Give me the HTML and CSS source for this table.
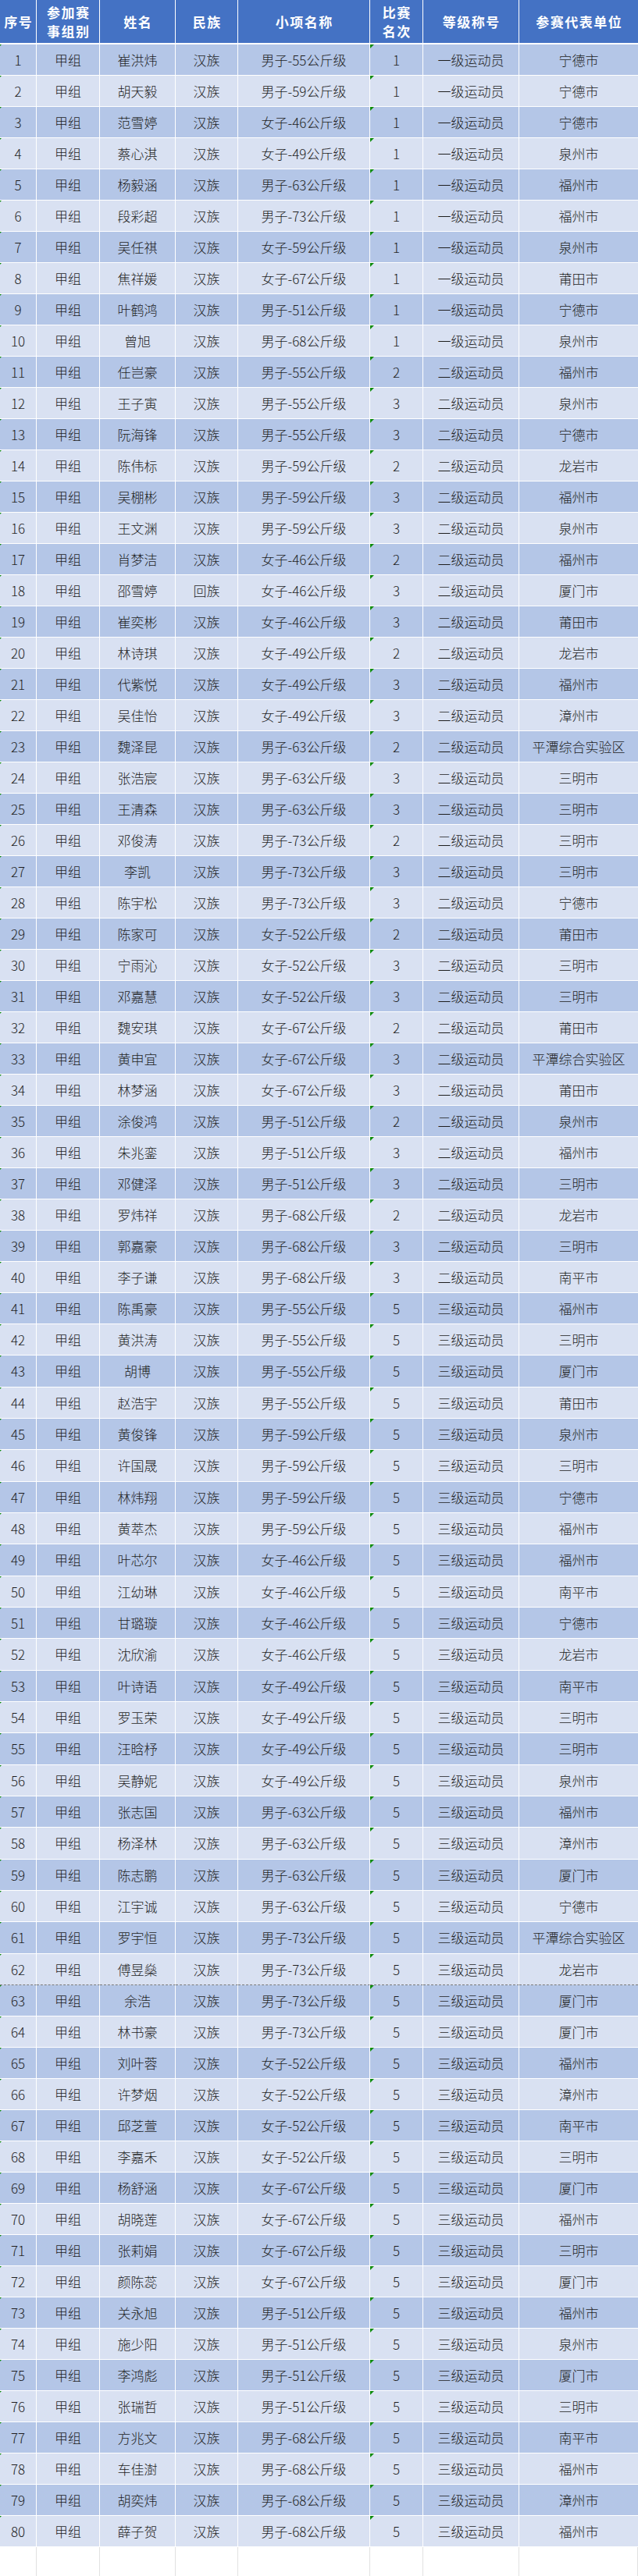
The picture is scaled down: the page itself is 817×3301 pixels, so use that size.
FILE: index.html
```html
<!DOCTYPE html>
<html lang="zh-CN">
<head>
<meta charset="utf-8">
<title>成绩表</title>
<link rel="stylesheet" href="styles.css">
</head>
<body>
<table class="sheet">
<colgroup>
<col class="w1"><col class="w2"><col class="w3"><col class="w4"><col class="w5"><col class="w6"><col class="w7"><col class="w8">
</colgroup>
<thead>
<tr><th>序号</th><th>参加赛<br>事组别</th><th>姓名</th><th>民族</th><th>小项名称</th><th>比赛<br>名次</th><th>等级称号</th><th>参赛代表单位</th></tr>
</thead>
<tbody>
<tr><td class="no">1</td><td>甲组</td><td>崔洪炜</td><td>汉族</td><td>男子-55公斤级</td><td class="rk">1</td><td>一级运动员</td><td>宁德市</td></tr>
<tr><td class="no">2</td><td>甲组</td><td>胡天毅</td><td>汉族</td><td>男子-59公斤级</td><td class="rk">1</td><td>一级运动员</td><td>宁德市</td></tr>
<tr><td class="no">3</td><td>甲组</td><td>范雪婷</td><td>汉族</td><td>女子-46公斤级</td><td class="rk">1</td><td>一级运动员</td><td>宁德市</td></tr>
<tr><td class="no">4</td><td>甲组</td><td>蔡心淇</td><td>汉族</td><td>女子-49公斤级</td><td class="rk">1</td><td>一级运动员</td><td>泉州市</td></tr>
<tr><td class="no">5</td><td>甲组</td><td>杨毅涵</td><td>汉族</td><td>男子-63公斤级</td><td class="rk">1</td><td>一级运动员</td><td>福州市</td></tr>
<tr><td class="no">6</td><td>甲组</td><td>段彩超</td><td>汉族</td><td>男子-73公斤级</td><td class="rk">1</td><td>一级运动员</td><td>福州市</td></tr>
<tr><td class="no">7</td><td>甲组</td><td>吴任祺</td><td>汉族</td><td>女子-59公斤级</td><td class="rk">1</td><td>一级运动员</td><td>泉州市</td></tr>
<tr><td class="no">8</td><td>甲组</td><td>焦祥媛</td><td>汉族</td><td>女子-67公斤级</td><td class="rk">1</td><td>一级运动员</td><td>莆田市</td></tr>
<tr><td class="no">9</td><td>甲组</td><td>叶鹤鸿</td><td>汉族</td><td>男子-51公斤级</td><td class="rk">1</td><td>一级运动员</td><td>宁德市</td></tr>
<tr><td class="no">10</td><td>甲组</td><td>曾旭</td><td>汉族</td><td>男子-68公斤级</td><td class="rk">1</td><td>一级运动员</td><td>泉州市</td></tr>
<tr><td class="no">11</td><td>甲组</td><td>任岂豪</td><td>汉族</td><td>男子-55公斤级</td><td class="rk">2</td><td>二级运动员</td><td>福州市</td></tr>
<tr><td class="no">12</td><td>甲组</td><td>王子寅</td><td>汉族</td><td>男子-55公斤级</td><td class="rk">3</td><td>二级运动员</td><td>泉州市</td></tr>
<tr><td class="no">13</td><td>甲组</td><td>阮海锋</td><td>汉族</td><td>男子-55公斤级</td><td class="rk">3</td><td>二级运动员</td><td>宁德市</td></tr>
<tr><td class="no">14</td><td>甲组</td><td>陈伟标</td><td>汉族</td><td>男子-59公斤级</td><td class="rk">2</td><td>二级运动员</td><td>龙岩市</td></tr>
<tr><td class="no">15</td><td>甲组</td><td>吴棚彬</td><td>汉族</td><td>男子-59公斤级</td><td class="rk">3</td><td>二级运动员</td><td>福州市</td></tr>
<tr><td class="no">16</td><td>甲组</td><td>王文渊</td><td>汉族</td><td>男子-59公斤级</td><td class="rk">3</td><td>二级运动员</td><td>泉州市</td></tr>
<tr><td class="no">17</td><td>甲组</td><td>肖梦洁</td><td>汉族</td><td>女子-46公斤级</td><td class="rk">2</td><td>二级运动员</td><td>福州市</td></tr>
<tr><td class="no">18</td><td>甲组</td><td>邵雪婷</td><td>回族</td><td>女子-46公斤级</td><td class="rk">3</td><td>二级运动员</td><td>厦门市</td></tr>
<tr><td class="no">19</td><td>甲组</td><td>崔奕彬</td><td>汉族</td><td>女子-46公斤级</td><td class="rk">3</td><td>二级运动员</td><td>莆田市</td></tr>
<tr><td class="no">20</td><td>甲组</td><td>林诗琪</td><td>汉族</td><td>女子-49公斤级</td><td class="rk">2</td><td>二级运动员</td><td>龙岩市</td></tr>
<tr><td class="no">21</td><td>甲组</td><td>代紫悦</td><td>汉族</td><td>女子-49公斤级</td><td class="rk">3</td><td>二级运动员</td><td>福州市</td></tr>
<tr><td class="no">22</td><td>甲组</td><td>吴佳怡</td><td>汉族</td><td>女子-49公斤级</td><td class="rk">3</td><td>二级运动员</td><td>漳州市</td></tr>
<tr><td class="no">23</td><td>甲组</td><td>魏泽昆</td><td>汉族</td><td>男子-63公斤级</td><td class="rk">2</td><td>二级运动员</td><td>平潭综合实验区</td></tr>
<tr><td class="no">24</td><td>甲组</td><td>张浩宸</td><td>汉族</td><td>男子-63公斤级</td><td class="rk">3</td><td>二级运动员</td><td>三明市</td></tr>
<tr><td class="no">25</td><td>甲组</td><td>王清森</td><td>汉族</td><td>男子-63公斤级</td><td class="rk">3</td><td>二级运动员</td><td>三明市</td></tr>
<tr><td class="no">26</td><td>甲组</td><td>邓俊涛</td><td>汉族</td><td>男子-73公斤级</td><td class="rk">2</td><td>二级运动员</td><td>三明市</td></tr>
<tr><td class="no">27</td><td>甲组</td><td>李凯</td><td>汉族</td><td>男子-73公斤级</td><td class="rk">3</td><td>二级运动员</td><td>三明市</td></tr>
<tr><td class="no">28</td><td>甲组</td><td>陈宇松</td><td>汉族</td><td>男子-73公斤级</td><td class="rk">3</td><td>二级运动员</td><td>宁德市</td></tr>
<tr><td class="no">29</td><td>甲组</td><td>陈家可</td><td>汉族</td><td>女子-52公斤级</td><td class="rk">2</td><td>二级运动员</td><td>莆田市</td></tr>
<tr><td class="no">30</td><td>甲组</td><td>宁雨沁</td><td>汉族</td><td>女子-52公斤级</td><td class="rk">3</td><td>二级运动员</td><td>三明市</td></tr>
<tr><td class="no">31</td><td>甲组</td><td>邓嘉慧</td><td>汉族</td><td>女子-52公斤级</td><td class="rk">3</td><td>二级运动员</td><td>三明市</td></tr>
<tr><td class="no">32</td><td>甲组</td><td>魏安琪</td><td>汉族</td><td>女子-67公斤级</td><td class="rk">2</td><td>二级运动员</td><td>莆田市</td></tr>
<tr><td class="no">33</td><td>甲组</td><td>黄申宜</td><td>汉族</td><td>女子-67公斤级</td><td class="rk">3</td><td>二级运动员</td><td>平潭综合实验区</td></tr>
<tr><td class="no">34</td><td>甲组</td><td>林梦涵</td><td>汉族</td><td>女子-67公斤级</td><td class="rk">3</td><td>二级运动员</td><td>莆田市</td></tr>
<tr><td class="no">35</td><td>甲组</td><td>涂俊鸿</td><td>汉族</td><td>男子-51公斤级</td><td class="rk">2</td><td>二级运动员</td><td>泉州市</td></tr>
<tr><td class="no">36</td><td>甲组</td><td>朱兆銮</td><td>汉族</td><td>男子-51公斤级</td><td class="rk">3</td><td>二级运动员</td><td>福州市</td></tr>
<tr><td class="no">37</td><td>甲组</td><td>邓健泽</td><td>汉族</td><td>男子-51公斤级</td><td class="rk">3</td><td>二级运动员</td><td>三明市</td></tr>
<tr><td class="no">38</td><td>甲组</td><td>罗炜祥</td><td>汉族</td><td>男子-68公斤级</td><td class="rk">2</td><td>二级运动员</td><td>龙岩市</td></tr>
<tr><td class="no">39</td><td>甲组</td><td>郭嘉豪</td><td>汉族</td><td>男子-68公斤级</td><td class="rk">3</td><td>二级运动员</td><td>三明市</td></tr>
<tr><td class="no">40</td><td>甲组</td><td>李子谦</td><td>汉族</td><td>男子-68公斤级</td><td class="rk">3</td><td>二级运动员</td><td>南平市</td></tr>
<tr><td class="no">41</td><td>甲组</td><td>陈禹豪</td><td>汉族</td><td>男子-55公斤级</td><td class="rk">5</td><td>三级运动员</td><td>福州市</td></tr>
<tr><td class="no">42</td><td>甲组</td><td>黄洪涛</td><td>汉族</td><td>男子-55公斤级</td><td class="rk">5</td><td>三级运动员</td><td>三明市</td></tr>
<tr class="tall"><td class="no">43</td><td>甲组</td><td>胡博</td><td>汉族</td><td>男子-55公斤级</td><td class="rk">5</td><td>三级运动员</td><td>厦门市</td></tr>
<tr><td class="no">44</td><td>甲组</td><td>赵浩宇</td><td>汉族</td><td>男子-55公斤级</td><td class="rk">5</td><td>三级运动员</td><td>莆田市</td></tr>
<tr><td class="no">45</td><td>甲组</td><td>黄俊锋</td><td>汉族</td><td>男子-59公斤级</td><td class="rk">5</td><td>三级运动员</td><td>泉州市</td></tr>
<tr class="tall"><td class="no">46</td><td>甲组</td><td>许国晟</td><td>汉族</td><td>男子-59公斤级</td><td class="rk">5</td><td>三级运动员</td><td>三明市</td></tr>
<tr><td class="no">47</td><td>甲组</td><td>林炜翔</td><td>汉族</td><td>男子-59公斤级</td><td class="rk">5</td><td>三级运动员</td><td>宁德市</td></tr>
<tr><td class="no">48</td><td>甲组</td><td>黄萃杰</td><td>汉族</td><td>男子-59公斤级</td><td class="rk">5</td><td>三级运动员</td><td>福州市</td></tr>
<tr class="tall"><td class="no">49</td><td>甲组</td><td>叶芯尔</td><td>汉族</td><td>女子-46公斤级</td><td class="rk">5</td><td>三级运动员</td><td>福州市</td></tr>
<tr><td class="no">50</td><td>甲组</td><td>江幼琳</td><td>汉族</td><td>女子-46公斤级</td><td class="rk">5</td><td>三级运动员</td><td>南平市</td></tr>
<tr><td class="no">51</td><td>甲组</td><td>甘璐璇</td><td>汉族</td><td>女子-46公斤级</td><td class="rk">5</td><td>三级运动员</td><td>宁德市</td></tr>
<tr class="tall"><td class="no">52</td><td>甲组</td><td>沈欣渝</td><td>汉族</td><td>女子-46公斤级</td><td class="rk">5</td><td>三级运动员</td><td>龙岩市</td></tr>
<tr><td class="no">53</td><td>甲组</td><td>叶诗语</td><td>汉族</td><td>女子-49公斤级</td><td class="rk">5</td><td>三级运动员</td><td>南平市</td></tr>
<tr><td class="no">54</td><td>甲组</td><td>罗玉荣</td><td>汉族</td><td>女子-49公斤级</td><td class="rk">5</td><td>三级运动员</td><td>三明市</td></tr>
<tr class="tall"><td class="no">55</td><td>甲组</td><td>汪晗杼</td><td>汉族</td><td>女子-49公斤级</td><td class="rk">5</td><td>三级运动员</td><td>三明市</td></tr>
<tr><td class="no">56</td><td>甲组</td><td>吴静妮</td><td>汉族</td><td>女子-49公斤级</td><td class="rk">5</td><td>三级运动员</td><td>泉州市</td></tr>
<tr><td class="no">57</td><td>甲组</td><td>张志国</td><td>汉族</td><td>男子-63公斤级</td><td class="rk">5</td><td>三级运动员</td><td>福州市</td></tr>
<tr class="tall"><td class="no">58</td><td>甲组</td><td>杨泽林</td><td>汉族</td><td>男子-63公斤级</td><td class="rk">5</td><td>三级运动员</td><td>漳州市</td></tr>
<tr><td class="no">59</td><td>甲组</td><td>陈志鹏</td><td>汉族</td><td>男子-63公斤级</td><td class="rk">5</td><td>三级运动员</td><td>厦门市</td></tr>
<tr><td class="no">60</td><td>甲组</td><td>江宇诚</td><td>汉族</td><td>男子-63公斤级</td><td class="rk">5</td><td>三级运动员</td><td>宁德市</td></tr>
<tr class="tall"><td class="no">61</td><td>甲组</td><td>罗宇恒</td><td>汉族</td><td>男子-73公斤级</td><td class="rk">5</td><td>三级运动员</td><td>平潭综合实验区</td></tr>
<tr class="brk"><td class="no">62</td><td>甲组</td><td>傅昱燊</td><td>汉族</td><td>男子-73公斤级</td><td class="rk">5</td><td>三级运动员</td><td>龙岩市</td></tr>
<tr><td class="no">63</td><td>甲组</td><td>余浩</td><td>汉族</td><td>男子-73公斤级</td><td class="rk">5</td><td>三级运动员</td><td>厦门市</td></tr>
<tr><td class="no">64</td><td>甲组</td><td>林书豪</td><td>汉族</td><td>男子-73公斤级</td><td class="rk">5</td><td>三级运动员</td><td>厦门市</td></tr>
<tr><td class="no">65</td><td>甲组</td><td>刘叶蓉</td><td>汉族</td><td>女子-52公斤级</td><td class="rk">5</td><td>三级运动员</td><td>福州市</td></tr>
<tr><td class="no">66</td><td>甲组</td><td>许梦烟</td><td>汉族</td><td>女子-52公斤级</td><td class="rk">5</td><td>三级运动员</td><td>漳州市</td></tr>
<tr><td class="no">67</td><td>甲组</td><td>邱芝萱</td><td>汉族</td><td>女子-52公斤级</td><td class="rk">5</td><td>三级运动员</td><td>南平市</td></tr>
<tr><td class="no">68</td><td>甲组</td><td>李嘉禾</td><td>汉族</td><td>女子-52公斤级</td><td class="rk">5</td><td>三级运动员</td><td>三明市</td></tr>
<tr><td class="no">69</td><td>甲组</td><td>杨舒涵</td><td>汉族</td><td>女子-67公斤级</td><td class="rk">5</td><td>三级运动员</td><td>厦门市</td></tr>
<tr><td class="no">70</td><td>甲组</td><td>胡晓莲</td><td>汉族</td><td>女子-67公斤级</td><td class="rk">5</td><td>三级运动员</td><td>福州市</td></tr>
<tr><td class="no">71</td><td>甲组</td><td>张莉娟</td><td>汉族</td><td>女子-67公斤级</td><td class="rk">5</td><td>三级运动员</td><td>三明市</td></tr>
<tr><td class="no">72</td><td>甲组</td><td>颜陈蕊</td><td>汉族</td><td>女子-67公斤级</td><td class="rk">5</td><td>三级运动员</td><td>厦门市</td></tr>
<tr><td class="no">73</td><td>甲组</td><td>关永旭</td><td>汉族</td><td>男子-51公斤级</td><td class="rk">5</td><td>三级运动员</td><td>福州市</td></tr>
<tr><td class="no">74</td><td>甲组</td><td>施少阳</td><td>汉族</td><td>男子-51公斤级</td><td class="rk">5</td><td>三级运动员</td><td>泉州市</td></tr>
<tr><td class="no">75</td><td>甲组</td><td>李鸿彪</td><td>汉族</td><td>男子-51公斤级</td><td class="rk">5</td><td>三级运动员</td><td>厦门市</td></tr>
<tr><td class="no">76</td><td>甲组</td><td>张瑞哲</td><td>汉族</td><td>男子-51公斤级</td><td class="rk">5</td><td>三级运动员</td><td>三明市</td></tr>
<tr><td class="no">77</td><td>甲组</td><td>方兆文</td><td>汉族</td><td>男子-68公斤级</td><td class="rk">5</td><td>三级运动员</td><td>南平市</td></tr>
<tr><td class="no">78</td><td>甲组</td><td>车佳澍</td><td>汉族</td><td>男子-68公斤级</td><td class="rk">5</td><td>三级运动员</td><td>福州市</td></tr>
<tr><td class="no">79</td><td>甲组</td><td>胡奕炜</td><td>汉族</td><td>男子-68公斤级</td><td class="rk">5</td><td>三级运动员</td><td>漳州市</td></tr>
<tr><td class="no">80</td><td>甲组</td><td>薛子贺</td><td>汉族</td><td>男子-68公斤级</td><td class="rk">5</td><td>三级运动员</td><td>福州市</td></tr>
<tr class="blank"><td></td><td></td><td></td><td></td><td></td><td></td><td></td><td></td></tr>
</tbody>
</table>
</body>
</html>
```
FILE: styles.css
```css
html, body {
  margin: 0;
  padding: 0;
  background: #ffffff;
}

body {
  font-family: "Noto Sans CJK SC", "Noto Sans", sans-serif;
  overflow: hidden;
}

.sheet {
  width: 817px;
  table-layout: fixed;
  border-collapse: separate;
  border-spacing: 0;
}

.w1 { width: 47px; }
.w2 { width: 81px; }
.w3 { width: 97px; }
.w4 { width: 80px; }
.w5 { width: 169px; }
.w6 { width: 68px; }
.w7 { width: 123px; }
.w8 { width: 152px; }

.sheet th,
.sheet td {
  box-sizing: border-box;
  padding: 0;
  text-align: center;
  vertical-align: middle;
  border-right: 1px solid #ffffff;
  white-space: nowrap;
  overflow: hidden;
}

.sheet th:last-child,
.sheet td:last-child {
  border-right: none;
}

.sheet th {
  height: 57px;
  background: #4472c4;
  color: #ffffff;
  font-weight: 700;
  font-size: 17px;
  line-height: 24px;
  letter-spacing: 1.5px;
  padding-left: 1.5px;
  border-bottom: 2px solid #ffffff;
}

.sheet td {
  position: relative;
  height: 40px;
  font-size: 17px;
  font-weight: 300;
  color: #1e1e1e;
  line-height: 20px;
  border-bottom: 1px solid #ffffff;
}

.sheet tbody tr.tall td {
  height: 41px;
}

.sheet tbody tr:nth-child(odd) td {
  background: #b4c6e7;
}

.sheet tbody tr:nth-child(even) td {
  background: #d9e1f2;
}

.sheet tbody tr.brk td {
  border-bottom: 1px dashed #7a7a7a;
}

/* green "number stored as text" indicators */
.sheet td.rk::before,
.sheet td.no::before {
  content: "";
  position: absolute;
  top: 0;
  left: 0;
  width: 0;
  height: 0;
  border-top: 5px solid #0b8a0b;
  border-right: 5px solid transparent;
}

.sheet td.no::before {
  left: -3px;
}

.sheet tbody tr.blank td {
  background: #ffffff;
  height: 40px;
  border-bottom: 1px solid #e1e1e1;
  border-right: 1px solid #e1e1e1;
}

.sheet tbody tr.blank td::before {
  display: none;
}
```
